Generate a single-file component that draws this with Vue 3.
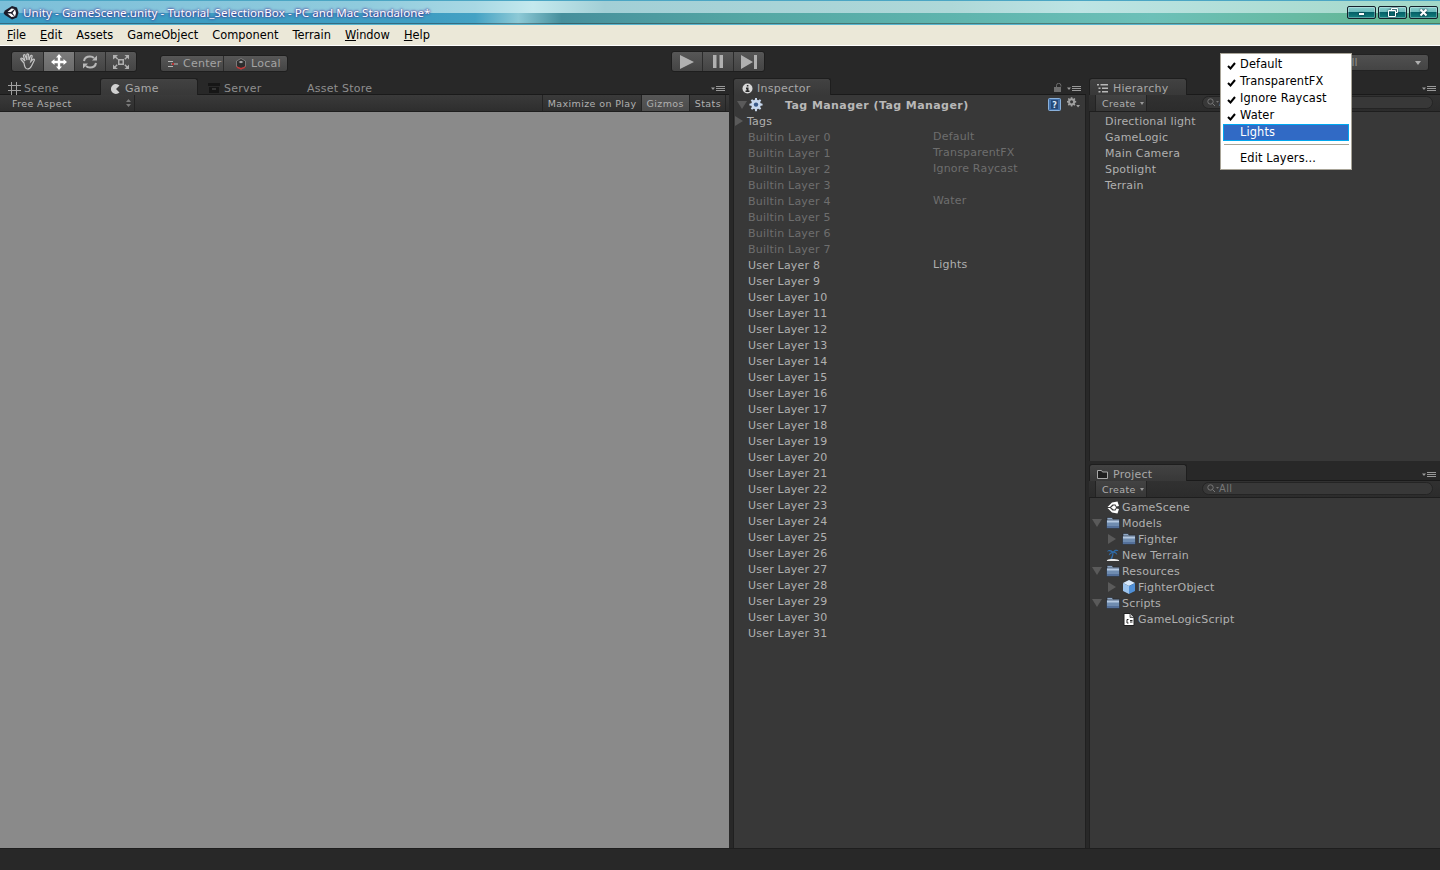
<template>
  <div class="app">
    <header class="titlebar">
      <svg class="unity-logo" width="16" height="16" viewBox="0 0 16 16"><path d="M9 1l5 1.500 1.500 5-1.500 5-5 2-7-4.500L.5 8 2 5.500z" fill="#1c1c2a"/><path d="M8.500 3.500l3 .5-3.500 3H4.500zM12 4.500l1 3.500-1 3.500-2.500-3.500zM4.500 8.500H8l3.500 3-3 .5z" fill="#fff"/></svg>
      <span class="title-text">Unity - GameScene.unity - Tutorial_SelectionBox - PC and Mac Standalone*</span>
      <div class="win-buttons">
        <span class="win-btn"><i class="min-glyph"></i></span>
        <span class="win-btn"><svg width="10" height="9" viewBox="0 0 10 9"><path d="M3.500 2.500v-2h6v4h-2M.5 2.500h7v6h-7z" fill="none" stroke="#fff"/></svg></span>
        <span class="win-btn"><svg width="9" height="9" viewBox="0 0 9 9"><path d="M1.500 1.500l6 6M7.500 1.500l-6 6" stroke="#fff" stroke-width="2"/></svg></span>
      </div>
    </header>

    <nav class="menubar">
      <span v-for="m in menus" :key="m.label" class="menu-item"><u v-if="m.u">{{ m.label[0] }}</u>{{ m.u ? m.label.slice(1) : m.label }}</span>
    </nav>

    <div class="toolbar">
      <div class="btn-group tools">
        <span class="tool">
          <svg width="20" height="20" viewBox="0 0 20 20" fill="none" stroke="#c4c4c4" stroke-width="1.200"><path d="M6 11L3 7.500c-.8-1 .5-2 1.500-1L7 9 5.500 4c-.4-1.300 1.300-1.800 1.700-.5L9 8 8.800 2.800c0-1.300 1.700-1.300 1.800 0L11 8l1.500-4c.5-1.200 2-.7 1.600.5L12.800 9.500l2-2c1-1 2.200 0 1.400 1L13.500 14c-1 2-2 3-4 3-2.500 0-3-2-3.500-6z"/></svg>
        </span>
        <span class="tool active">
          <svg width="16" height="16" viewBox="0 0 16 16" fill="#fff"><path d="M8 0l3 3.500H9.200v3.300h3.300V5L16 8l-3.500 3v-1.800H9.200v3.300H11L8 16l-3-3.500h1.800V9.200H3.500V11L0 8l3.500-3v1.800h3.300V3.500H5z"/></svg>
        </span>
        <span class="tool">
          <svg width="16" height="16" viewBox="0 0 16 16" fill="none" stroke="#b8b8b8" stroke-width="2"><path d="M2 7c.5-3 3-4.500 6-4.500 1.500 0 3 .5 4 1.500"/><path d="M14 9c-.5 3-3 4.500-6 4.500-1.500 0-3-.5-4-1.500"/><path d="M15 1.500v5h-5zM1 14.500v-5h5z" fill="#b8b8b8" stroke="none"/></svg>
        </span>
        <span class="tool">
          <svg width="18" height="16" viewBox="0 0 18 16" fill="#b0b0b0"><path d="M6 5h6v6H6zm1.500 1.500v3h3v-3z"/><path d="M1 1h5L4.300 2.700l2 2-1 1-2-2L1 5.500zM17 1v4.500l-1.700-1.800-2 2-1-1 2-2L12.500 1zM1 15v-4.500l1.700 1.800 2-2 1 1-2 2L6 15zM17 15h-4.500l1.800-1.700-2-2 1-1 2 2 1.700-1.800z"/></svg>
        </span>
      </div>

      <div class="btn-group pivots">
        <span class="pivot center-btn">
          <svg width="10" height="8" viewBox="0 0 10 8"><path d="M0 1h5v1H0zM3 3.500h7v1H3zM0 6h5v1H0z" fill="#b8b8b8"/><rect x="4" y="3" width="2" height="2" fill="#b33"/></svg>
          Center
        </span>
        <span class="pivot local-btn">
          <svg width="12" height="12" viewBox="0 0 12 12"><path d="M6 .5l4.500 2.500v5.500L6 11 1.500 8.500V3z" fill="#2e2e2e" stroke="#8a8a8a" stroke-width=".8"/><path d="M3.500 4L6 2.800 8.500 4 6 5.200z" fill="#aaa"/><path d="M1.500 7.500C3 10.500 9 10.500 10.500 7.500L10 10 6 11.500 2 10z" fill="#c33"/></svg>
          Local
        </span>
      </div>

      <div class="btn-group play">
        <span class="play-btn"><svg width="16" height="14" viewBox="0 0 16 14"><path d="M1 0l14 7-14 7z" fill="#b0b0b0"/></svg></span>
        <span class="play-btn"><svg width="10" height="13" viewBox="0 0 10 13"><path d="M0 0h3.500v13H0zM6.500 0H10v13H6.500z" fill="#b0b0b0"/></svg></span>
        <span class="play-btn"><svg width="16" height="14" viewBox="0 0 16 14"><path d="M0 0l12 7-12 7zM13 0h3v14h-3z" fill="#b0b0b0"/></svg></span>
      </div>

      <div class="layers-drop">All<i class="layers-arrow"></i></div>
    </div>

    <main class="workspace">
      <!-- scene / game column -->
      <section class="col col-game">
        <div class="tabstrip">
          <span class="tab plain scene-tab">
            <svg width="13" height="13" viewBox="0 0 13 13" stroke="#a0a0a0" fill="none"><path d="M3.500 0v13M8.500 0v13M0 3.500h13M0 8.500h13"/></svg>
            Scene
          </span>
          <span class="tab active game-tab">
            <svg width="11" height="10" viewBox="0 0 11 10"><path d="M9.500 1.500A5 5 0 1 0 9.500 8.500L6 5z" fill="#d0d0d0"/></svg>
            Game
          </span>
          <span class="tab plain server-tab">
            <svg width="12" height="10" viewBox="0 0 12 10"><path d="M0 0h12v3H0zM1 4h10v6H1z" fill="#161616"/><path d="M4 5.500h4v1H4z" fill="#555"/></svg>
            Server
          </span>
          <span class="tab plain store-tab">Asset Store</span>
          <svg class="tab-menu" width="15" height="6" viewBox="0 0 15 6"><path d="M0 1.500h4l-2 2.500z" fill="#999"/><path d="M5 .5h9M5 2.500h9M5 4.500h9" stroke="#999"/></svg>
        </div>
        <div class="subbar">
          <span class="sub-cell aspect">Free Aspect<svg width="5" height="8" viewBox="0 0 5 8"><path d="M2.500 0L5 3H0zM2.500 8L5 5H0z" fill="#7a7a7a"/></svg></span>
          <span class="sub-spacer"></span>
          <span class="sub-cell maximize">Maximize on Play</span>
          <span class="sub-cell on">Gizmos</span>
          <span class="sub-cell stats">Stats</span>
        </div>
        <div class="game-view"></div>
      </section>

      <!-- inspector -->
      <section class="col col-inspector">
        <div class="tabstrip">
          <span class="tab active inspector-tab">
            <svg width="11" height="11" viewBox="0 0 11 11"><circle cx="5.500" cy="5.500" r="5" fill="#d8d8d8"/><path d="M4.800 2h1.600v1.500H4.800zM4 4.500h2.500v3H7.500V9h-4V7.500h1V6H4z" fill="#2a2a2a"/></svg>
            Inspector
          </span>
          <svg class="lock" width="9" height="9" viewBox="0 0 9 9"><path d="M2.500 4V2.500a2.200 2.200 0 0 1 4.400 0v1" fill="none" stroke="#6e6e6e"/><rect y="4" width="7" height="5" fill="#6e6e6e"/></svg>
          <svg class="tab-menu" width="15" height="6" viewBox="0 0 15 6"><path d="M0 1.500h4l-2 2.500z" fill="#999"/><path d="M5 .5h9M5 2.500h9M5 4.500h9" stroke="#999"/></svg>
        </div>
        <div class="insp-body">
          <div class="insp-head">
            <i class="tri down head-tri"></i>
            <svg class="gear-blue" width="14" height="14" viewBox="0 0 16 16"><path d="M7 0h2l.4 2.200 1.300.5L12.500 1.400 14 2.900l-1.300 1.800.6 1.300L15.500 6.500v2l-2.200.4-.6 1.300 1.300 1.800-1.500 1.500-1.800-1.300-1.300.5L9 15H7l-.4-2.300-1.300-.5-1.800 1.300L2 12l1.300-1.800-.6-1.300L.5 8.500v-2l2.200-.5.6-1.300L2 2.900l1.500-1.500 1.800 1.300 1.300-.5z" fill="#c8d8ee"/><circle cx="8" cy="7.500" r="2.500" fill="#3a5a8a"/></svg>
            <span class="insp-title">Tag Manager (Tag Manager)</span>
            <svg class="help-book" width="13" height="13" viewBox="0 0 13 13"><rect x=".5" y=".5" width="12" height="12" rx="1" fill="#3f6ea8" stroke="#8ab0da"/><rect x="3" y="2" width="7" height="9" fill="#264a78"/><text x="6.500" y="9.500" font-size="8" font-weight="700" text-anchor="middle" fill="#dbe8f6" font-family="DejaVu Sans">?</text></svg>
            <svg class="gear-small" width="13" height="12" viewBox="0 0 17 15"><path d="M5 0h2l.3 1.500 1 .4L9.700 1 11 2.300l-.9 1.300.4 1L12 5v2l-1.500.3-.4 1 .9 1.300L9.700 11l-1.400-.9-1 .4L7 12H5l-.3-1.500-1-.4-1.400.9L1 9.600l.9-1.300-.4-1L0 7V5l1.500-.4.4-1L1 2.300 2.300 1l1.400.9 1-.4z" fill="#a0a0a0"/><circle cx="6" cy="6" r="2" fill="#383838"/><path d="M12 10h5l-2.500 3.500z" fill="#a0a0a0"/></svg>
          </div>
          <div class="row tags-row"><i class="tri right"></i>Tags</div>
          <div v-for="l in layers" :key="l.name" class="row layer-row" :class="{ builtin: l.builtin }">
            <span class="layer-name">{{ l.name }}</span>
            <span class="layer-value">{{ l.value }}</span>
          </div>
        </div>
      </section>

      <!-- hierarchy + project -->
      <section class="col col-right">
        <div class="pane pane-hierarchy">
          <div class="tabstrip">
            <span class="tab active side-tab">
              <svg width="11" height="9" viewBox="0 0 11 9"><path d="M0 0h2v1.500H0zM3.500 0H11v1.500H3.500zM1.500 3.500h2V5h-2zM5 3.500h6V5H5zM1.500 7h2v1.500h-2zM5 7h6v1.500H5z" fill="#b8b8b8"/></svg>
              Hierarchy
            </span>
            <svg class="tab-menu" width="15" height="6" viewBox="0 0 15 6"><path d="M0 1.500h4l-2 2.500z" fill="#999"/><path d="M5 .5h9M5 2.500h9M5 4.500h9" stroke="#999"/></svg>
          </div>
          <div class="subbar">
            <span class="create">Create<i class="caret"></i></span>
            <span class="search"><svg width="12" height="9" viewBox="0 0 12 9"><circle cx="3.500" cy="3.500" r="2.700" fill="none" stroke="#777"/><path d="M5.500 5.500L8 8" stroke="#777"/><path d="M9 3h3l-1.500 1.800z" fill="#777"/></svg>All</span>
          </div>
          <div class="tree hierarchy-list">
            <div v-for="h in hierarchy" :key="h" class="row">{{ h }}</div>
          </div>
        </div>

        <div class="pane pane-project">
          <div class="tabstrip">
            <span class="tab active side-tab">
              <svg width="11" height="9" viewBox="0 0 11 9"><path d="M1 .5h3.500l1 1.500h5v6.500H.5V.5z" fill="#1f1f1f" stroke="#a8a8a8"/></svg>
              Project
            </span>
            <svg class="tab-menu" width="15" height="6" viewBox="0 0 15 6"><path d="M0 1.500h4l-2 2.500z" fill="#999"/><path d="M5 .5h9M5 2.500h9M5 4.500h9" stroke="#999"/></svg>
          </div>
          <div class="subbar">
            <span class="create">Create<i class="caret"></i></span>
            <span class="search"><svg width="12" height="9" viewBox="0 0 12 9"><circle cx="3.500" cy="3.500" r="2.700" fill="none" stroke="#777"/><path d="M5.500 5.500L8 8" stroke="#777"/><path d="M9 3h3l-1.500 1.800z" fill="#777"/></svg>All</span>
          </div>
          <div class="tree project-list">
            <div v-for="p in project" :key="p.name" class="row" :class="{ nested: p.depth }">
              <i class="tri-slot"><i v-if="p.tri" class="tri" :class="p.tri"></i></i>
              <svg v-if="p.icon === 'unity'" class="file-icon" width="14" height="13" viewBox="0 0 14 13"><path d="M6 1.500L11.500 .5 13 5l-2.500.5-1-2h-3L4 6H1.500zM6 11.500l5.500 1L13 8l-2.500-.5-1 2h-3L4 7H1.500z" fill="#fff"/><path d="M5 6.500l2.500-2H9l1 2-1 2H7.500z" fill="#fff"/></svg>
              <svg v-else-if="p.icon === 'folder'" class="file-icon" width="14" height="12" viewBox="0 0 14 12"><path d="M1 .5h5l1 1.500h6.500v2H1z" fill="#8ea6c4" stroke="#22262e" stroke-width=".6"/><path d="M.5 3h13v8.500H.5z" fill="#6f8cb0" stroke="#22262e" stroke-width=".6"/><path d="M1 3.500h12v2H1z" fill="#b4c8e0"/><path d="M1 9h12v2H1z" fill="#54709a"/></svg>
              <svg v-else-if="p.icon === 'terrain'" class="file-icon terrain" width="15" height="14" viewBox="0 0 15 14"><path d="M7 3C5 1 2 1.500 1 3.500c2-.7 3.500-.7 5 .5-2 .5-3 2-3 3.500C5 6 6 5 7 4.800 6.500 7 6 9 4.500 11.500H6.500C7.500 9 8 7 8 4.500c1.500 0 3 1 4 2.500 0-2-1-3-3-3.500 1.500-1 3-1 4.500-.5C12.500 1 9.500 1 8 3z" fill="#2f6cab"/><path d="M1 12.500c3-1.500 9-1.500 13 0v1H1z" fill="#e8e8e8"/></svg>
              <svg v-else-if="p.icon === 'cube'" class="file-icon" width="13" height="14" viewBox="0 0 13 14"><path d="M6.500 0l6 3-6 3-6-3z" fill="#d6e8fb"/><path d="M.5 3l6 3v8l-6-3z" fill="#9cc4ee"/><path d="M12.500 3l-6 3v8l6-3z" fill="#4f8fd6"/></svg>
              <svg v-else-if="p.icon === 'script'" class="file-icon" width="11" height="13" viewBox="0 0 11 13"><path d="M.5.5h6.500l3.500 3.500v8.500H.5z" fill="#fff" stroke="#222"/><path d="M6.500.5V4.500h4" fill="#bbb" stroke="#222" stroke-width=".7"/><path d="M5 6.500H3.500v3.500H5M6.500 7.500h2.500M6.500 9h2.500" fill="none" stroke="#222"/></svg>
              <span class="file-label">{{ p.name }}</span>
            </div>
          </div>
        </div>
      </section>

      <!-- layers popup, sits over the hierarchy -->
      <div class="layer-menu">
        <div v-for="o in layerOptions" :key="o.name" class="opt" :class="{ selected: o.selected }">
          <svg v-if="o.checked" class="check" width="9" height="8" viewBox="0 0 9 8"><path d="M1 4l2.500 2.500L8 1" fill="none" stroke="#000" stroke-width="2"/></svg>
          {{ o.name }}
        </div>
        <div class="opt-sep"></div>
        <div class="opt edit">Edit Layers...</div>
      </div>
    </main>

    <footer class="statusbar"></footer>
  </div>
</template>

<script setup>
const menus = [
  { label: 'File', u: true },
  { label: 'Edit', u: true },
  { label: 'Assets' },
  { label: 'GameObject' },
  { label: 'Component' },
  { label: 'Terrain' },
  { label: 'Window', u: true },
  { label: 'Help', u: true }
]

const builtinValues = { 0: 'Default', 1: 'TransparentFX', 2: 'Ignore Raycast', 4: 'Water' }

const layers = Array.from({ length: 32 }, (_, i) => ({
  name: `${i < 8 ? 'Builtin' : 'User'} Layer ${i}`,
  builtin: i < 8,
  value: i === 8 ? 'Lights' : builtinValues[i] || ''
}))

const hierarchy = ['Directional light', 'GameLogic', 'Main Camera', 'Spotlight', 'Terrain']

const project = [
  { name: 'GameScene', icon: 'unity' },
  { name: 'Models', icon: 'folder', tri: 'down' },
  { name: 'Fighter', icon: 'folder', tri: 'right', depth: 1 },
  { name: 'New Terrain', icon: 'terrain' },
  { name: 'Resources', icon: 'folder', tri: 'down' },
  { name: 'FighterObject', icon: 'cube', tri: 'right', depth: 1 },
  { name: 'Scripts', icon: 'folder', tri: 'down' },
  { name: 'GameLogicScript', icon: 'script', depth: 1 }
]

const layerOptions = [
  { name: 'Default', checked: true },
  { name: 'TransparentFX', checked: true },
  { name: 'Ignore Raycast', checked: true },
  { name: 'Water', checked: true },
  { name: 'Lights', selected: true }
]
</script>

<style>
html, body { margin: 0; background: #282828; overflow: hidden; }
</style>

<style scoped>
.app {
  width: 1440px;
  height: 870px;
  display: flex;
  flex-direction: column;
  overflow: hidden;
  background: #282828;
  font-family: "DejaVu Sans", sans-serif;
  font-size: 11px;
  color: #b4b4b4;
}

/* window chrome */
.titlebar {
  height: 25px;
  box-sizing: border-box;
  display: flex;
  align-items: center;
  padding: 0 2px 0 3px;
  border-top: 1px solid #4ba6c4;
  border-bottom: 1px solid #57b4cf;
  background:
    linear-gradient(90deg, #7cbfd9 0, #8fcbdd 25%, #a8d8e4 33%, #c4e9ee 37%, #a2cfd6 42%, #aed8d8 66%, #bde4e4 75%, #a2d8c8 100%) top / 100% 54% no-repeat,
    linear-gradient(90deg, #3b9cc2 0, #3f9dc2 30%, #44a2c4 33%, #8cc9d6 36%, #468f9c 39%, #54a7a4 52%, #5fb5ae 67%, #6cc0b8 80%, #62b48e 100%) bottom / 100% 46% no-repeat;
}
.unity-logo { flex: none; }
.title-text {
  margin-left: 4px;
  font-family: "Noto Sans", sans-serif;
  font-size: 11.500px;
  letter-spacing: .09px;
  color: #fff;
  text-shadow: 0 0 3px #403090, 0 0 2px #403090;
  white-space: nowrap;
}
.win-buttons { margin-left: auto; display: flex; gap: 2px; }
.win-btn {
  width: 27px;
  height: 11px;
  border: 1px solid #14202a;
  border-radius: 2px;
  box-shadow: inset 0 0 0 1px rgba(255, 255, 255, .3);
  background: linear-gradient(#86cccb 0, #6dbcbc 45%, #056068 50%, #13827f 100%);
  display: flex;
  align-items: center;
  justify-content: center;
}
.win-btn svg, .min-glyph { filter: drop-shadow(0 0 1px #123); }
.min-glyph { width: 5px; height: 2px; background: #fff; margin-top: 3px; }

.menubar {
  height: 20px;
  flex: none;
  display: flex;
  align-items: center;
  gap: 14px;
  padding-left: 7px;
  background: #ebe8d8;
  border-bottom: 1px solid #fff;
  color: #000;
  font-size: 11.400px;
}
.menu-item { white-space: nowrap; }

/* main toolbar */
.toolbar {
  height: 32px;
  flex: none;
  position: relative;
  display: flex;
  align-items: flex-start;
  background: #282828;
}
.btn-group {
  display: flex;
  border-radius: 3px;
  border: 1px solid #1e1e1e;
  overflow: hidden;
  background: linear-gradient(#575757, #444);
}
.tools { margin: 5px 0 0 11px; height: 19px; }
.tool {
  width: 30px;
  display: flex;
  align-items: center;
  justify-content: center;
  border-left: 1px solid #2c2c2c;
}
.tool:first-child { border-left: 0; width: 31px; }
.tool.active { background: linear-gradient(#7c7c7c, #6a6a6a); }
.pivots { margin: 9px 0 0 23px; height: 15px; }
.pivot {
  width: 64px;
  box-sizing: border-box;
  display: flex;
  align-items: center;
  color: #a4a4a4;
  border-left: 1px solid #2c2c2c;
  letter-spacing: .25px;
}
.center-btn { padding-left: 7px; gap: 5px; border-left: 0; width: 62px; }
.local-btn { padding-left: 11px; gap: 4px; }
.play { margin: 5px 0 0 383px; height: 19px; }
.play-btn {
  width: 30px;
  display: flex;
  align-items: center;
  justify-content: center;
  border-left: 1px solid #2c2c2c;
}
.play-btn:first-child { border-left: 0; }
.layers-drop {
  position: absolute;
  right: 11px;
  top: 8px;
  width: 206px;
  height: 15px;
  border-radius: 3px;
  background: linear-gradient(#505050, #444);
  border: 1px solid #222;
  color: #8e8e8e;
  line-height: 15px;
  text-indent: 122px;
}
.layers-arrow {
  position: absolute;
  right: 7px;
  top: 6px;
  border: 3px solid transparent;
  border-top: 4px solid #b0b0b0;
}

/* panels */
.workspace {
  flex: 1;
  position: relative;
  display: flex;
  gap: 3px;
  min-height: 0;
}
.col { display: flex; flex-direction: column; min-height: 0; }
.col-game { width: 729px; margin-right: 1px; }
.col-inspector { width: 353px; }
.col-right { flex: 1; gap: 3px; }
.pane { display: flex; flex-direction: column; }
.pane-hierarchy { height: 383px; }
.pane-project { flex: 1; }

.tabstrip {
  height: 17px;
  flex: none;
  position: relative;
  display: flex;
  align-items: flex-end;
  box-sizing: border-box;
  border-bottom: 1px solid #1a1a1a;
}
.tab {
  height: 17px;
  box-sizing: border-box;
  display: flex;
  align-items: center;
  gap: 4px;
  letter-spacing: .25px;
  white-space: nowrap;
  position: relative;
  top: 1px;
  padding-top: 3px;
}
.tab.active {
  border: 1px solid #1e1e1e;
  border-bottom: 0;
  border-radius: 3px 3px 0 0;
  background: linear-gradient(#424242, #383838);
  color: #a8a8a8;
}
.tab.plain { color: #8e8e8e; }
.scene-tab { margin-left: 8px; width: 92px; gap: 3px; }
.game-tab { width: 98px; padding-left: 9px; }
.server-tab { margin-left: 10px; width: 99px; }
.store-tab { color: #909090; }
.inspector-tab { width: 98px; padding-left: 8px; }
.side-tab { width: 98px; padding-left: 7px; gap: 5px; }
.tab-menu { position: absolute; right: 3px; bottom: 2px; }
.col-inspector .tab-menu { right: 4px; }
.lock { position: absolute; right: 23px; bottom: 2px; }

.subbar {
  height: 17px;
  flex: none;
  box-sizing: border-box;
  display: flex;
  align-items: stretch;
  padding-left: 6px;
  background: linear-gradient(#3a3a3a, #2e2e2e);
  border-bottom: 1px solid #1e1e1e;
  font-size: 9.500px;
  letter-spacing: .38px;
  color: #b0b0b0;
}
.col-right .subbar { background: linear-gradient(#313131, #2c2c2c); }
.sub-cell {
  display: flex;
  align-items: center;
  padding: 0 5px;
  border-left: 1px solid #232323;
  white-space: nowrap;
}
.aspect { width: 129px; box-sizing: border-box; padding-left: 6px; justify-content: space-between; border-right: 1px solid #232323; border-left: 0; padding-right: 3px; }
.sub-spacer { flex: 1; }
.sub-cell.on { background: linear-gradient(#575757, #4c4c4c); }
.maximize { padding-right: 4px; }
.stats { margin-right: 3px; padding-right: 4px; border-right: 1px solid #232323; }

.game-view { flex: 1; background: #8a8a8a; }

.insp-body, .tree { flex: 1; background: #383838; }
.insp-body { border-left: 1px solid #202020; border-right: 1px solid #202020; }
.insp-head {
  height: 18px;
  box-sizing: border-box;
  padding-top: 2px;
  position: relative;
  display: flex;
  align-items: center;
}
.head-tri { margin-left: 3px; }
.gear-blue { margin-left: 2px; }
.insp-title {
  margin-left: 22px;
  font-weight: 700;
  font-size: 11px;
  letter-spacing: .42px;
  color: #b8b8b8;
}
.help-book { position: absolute; right: 24px; top: 3px; }
.gear-small { position: absolute; right: 5px; top: 2px; }

.row {
  height: 16px;
  display: flex;
  align-items: center;
  white-space: nowrap;
  letter-spacing: .2px;
  color: #b0b0b0;
}
.tags-row { padding-left: 1px; gap: 4px; }
.layer-row { padding-left: 14px; }
.layer-name { width: 185px; }
.layer-value { transform: translateY(-1px); }
.builtin { color: #6e6e6e; }

.tri { display: block; width: 0; height: 0; border-style: solid; border-color: transparent; }
.tri.right { border-width: 5px 0 5px 8px; border-left-color: #5a5a5a; }
.tri.down { border-width: 8px 5px 0 5px; border-top-color: #5a5a5a; }

.create {
  width: 52px;
  display: flex;
  align-items: center;
  gap: 4px;
  padding-left: 6px;
  border-left: 1px solid #232323;
  border-right: 1px solid #232323;
  box-sizing: border-box;
  background: linear-gradient(#434343, #373737);
}
.caret { border: 2px solid transparent; border-top: 3px solid #999; margin-top: 3px; }
.search {
  flex: 1;
  margin: 1px 7px 2px 55px;
  display: flex;
  align-items: center;
  gap: 0;
  padding-left: 4px;
  border-radius: 7px;
  background: #383838;
  border: 1px solid #242424;
  box-sizing: border-box;
  color: #777;
  font-size: 10px;
  letter-spacing: .3px;
}
.tree { border-left: 1px solid #202020; padding-top: 1px; }
.hierarchy-list .row { padding-left: 15px; }
.project-list .row { padding-left: 1px; }
.tri-slot { width: 15px; flex: none; display: flex; align-items: center; justify-content: flex-start; }
.tri-slot .tri { margin-left: 1px; }
.nested { margin-left: 16px; }
.file-icon { width: 14px; margin-right: 2px; flex: none; }

/* layers dropdown */
.layer-menu {
  position: absolute;
  left: 1220px;
  top: -25px;
  width: 132px;
  height: 117px;
  box-sizing: border-box;
  background: #fff;
  border: 1px solid #a8a498;
  padding: 2px;
  color: #000;
  font-size: 11.400px;
  letter-spacing: .12px;
  z-index: 2;
}
.opt {
  height: 17px;
  position: relative;
  display: flex;
  align-items: center;
  box-sizing: border-box;
  padding-left: 17px;
  padding-bottom: 1px;
}
.check { position: absolute; left: 4px; top: 6px; }
.opt.selected {
  background: #316ac5;
  border: 1px solid #00a8f0;
  color: #fff;
  padding-left: 16px;
}
.opt-sep { height: 1px; background: #a8a498; margin: 3px 0 4px 1px; }
.edit { margin-top: 5px; }

.statusbar {
  height: 22px;
  flex: none;
  background: #282828;
  border-top: 1px solid #1e1e1e;
  box-sizing: border-box;
}
</style>
